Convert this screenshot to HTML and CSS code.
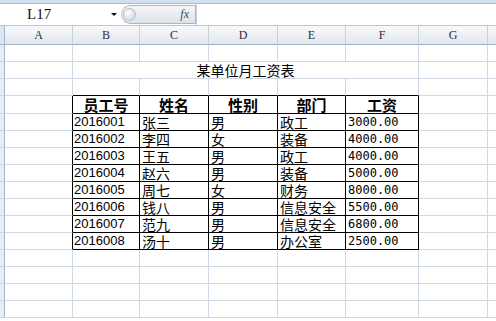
FILE: index.html
```html
<!DOCTYPE html>
<html lang="zh-CN">
<head>
  <meta charset="UTF-8">
  <title>某单位月工资表</title>
  <link rel="stylesheet" href="styles.css">
</head>
<body>

  <div class="ribbon-edge"></div>

  <div class="formula-bar">
    <div class="name-box">
      <span class="cell-ref">L17</span>
      <span class="drop"></span>
    </div>
    <div class="fx-box">
      <span class="grip"></span>
      <span class="fx">fx</span>
    </div>
    <div class="formula-input"></div>
  </div>

  <table class="sheet">
    <colgroup>
      <col class="col-rh">
      <col class="col-a">
      <col class="col-b">
      <col class="col-c">
      <col class="col-d">
      <col class="col-e">
      <col class="col-f">
      <col class="col-g">
      <col class="col-h">
    </colgroup>
    <thead>
      <tr>
        <th class="rh"></th>
        <th>A</th><th>B</th><th>C</th><th>D</th><th>E</th><th>F</th><th>G</th><th></th>
      </tr>
    </thead>
    <tbody>
      <tr><td class="rh"></td><td></td><td></td><td></td><td></td><td></td><td></td><td></td><td></td></tr>
      <tr><td class="rh"></td><td></td><td colspan="5" class="title">某单位月工资表</td><td></td><td></td></tr>
      <tr class="above"><td class="rh"></td><td></td><td></td><td></td><td></td><td></td><td></td><td></td><td></td></tr>

      <tr class="data head">
        <td class="rh"></td><td></td>
        <td>员工号</td><td>姓名</td><td>性别</td><td>部门</td><td>工资</td>
        <td></td><td></td>
      </tr>
      <tr class="data">
        <td class="rh"></td><td></td>
        <td class="num">2016001</td><td>张三</td><td>男</td><td>政工</td><td class="money">3000.00</td>
        <td></td><td></td>
      </tr>
      <tr class="data">
        <td class="rh"></td><td></td>
        <td class="num">2016002</td><td>李四</td><td>女</td><td>装备</td><td class="money">4000.00</td>
        <td></td><td></td>
      </tr>
      <tr class="data">
        <td class="rh"></td><td></td>
        <td class="num">2016003</td><td>王五</td><td>男</td><td>政工</td><td class="money">4000.00</td>
        <td></td><td></td>
      </tr>
      <tr class="data">
        <td class="rh"></td><td></td>
        <td class="num">2016004</td><td>赵六</td><td>男</td><td>装备</td><td class="money">5000.00</td>
        <td></td><td></td>
      </tr>
      <tr class="data">
        <td class="rh"></td><td></td>
        <td class="num">2016005</td><td>周七</td><td>女</td><td>财务</td><td class="money">8000.00</td>
        <td></td><td></td>
      </tr>
      <tr class="data">
        <td class="rh"></td><td></td>
        <td class="num">2016006</td><td>钱八</td><td>男</td><td>信息安全</td><td class="money">5500.00</td>
        <td></td><td></td>
      </tr>
      <tr class="data">
        <td class="rh"></td><td></td>
        <td class="num">2016007</td><td>范九</td><td>男</td><td>信息安全</td><td class="money">6800.00</td>
        <td></td><td></td>
      </tr>
      <tr class="data">
        <td class="rh"></td><td></td>
        <td class="num">2016008</td><td>汤十</td><td>男</td><td>办公室</td><td class="money">2500.00</td>
        <td></td><td></td>
      </tr>

      <tr><td class="rh"></td><td></td><td></td><td></td><td></td><td></td><td></td><td></td><td></td></tr>
      <tr><td class="rh"></td><td></td><td></td><td></td><td></td><td></td><td></td><td></td><td></td></tr>
      <tr><td class="rh"></td><td></td><td></td><td></td><td></td><td></td><td></td><td></td><td></td></tr>
      <tr><td class="rh"></td><td></td><td></td><td></td><td></td><td></td><td></td><td></td><td></td></tr>
    </tbody>
  </table>

</body>
</html>
```

FILE: styles.css
```css
html, body {
  margin: 0;
  padding: 0;
  background-color: #fff;
  overflow: hidden;
  font-family: "Noto Sans CJK SC", sans-serif;
}

/* top of the ribbon, cut off */
.ribbon-edge {
  height: 3px;
  background-color: #d3e0ef;
  border-bottom: 1px solid #a7bbd4;
}

/* formula bar */
.formula-bar {
  display: flex;
  align-items: center;
  height: 21px;
  border-bottom: 1px solid #b7c5d8;
  background-color: #fff;
}

.name-box {
  width: 121px;
  height: 21px;
  display: flex;
  align-items: center;
  position: relative;
}

.cell-ref {
  padding-left: 27px;
  font-family: "Liberation Serif", serif;
  font-size: 15px;
  color: #111;
}

.drop {
  position: absolute;
  left: 111px;
  top: 9px;
  width: 0;
  height: 0;
  border-left: 3px solid transparent;
  border-right: 3px solid transparent;
  border-top: 3px solid #111;
}

.fx-box {
  width: 75px;
  height: 19px;
  display: flex;
  align-items: center;
  justify-content: space-between;
  border: 1px solid #a9b6c6;
  border-left-color: #b8c4d2;
  border-radius: 10px 0 0 10px;
  background: linear-gradient(#f4f6f9, #dde3eb);
  box-sizing: border-box;
}

.grip {
  width: 13px;
  height: 13px;
  margin-left: 1px;
  border-radius: 50%;
  border: 1px solid #b3bdc9;
  box-sizing: border-box;
  background: radial-gradient(circle at 35% 35%, #fff, #d7dee6 70%, #b6c0cc);
}

.fx {
  margin-right: 6px;
  font-family: "Liberation Serif", serif;
  font-style: italic;
  font-size: 12px;
  color: #3c4a5c;
}

.formula-input {
  flex: 1;
  height: 21px;
  border-left: 1px solid #c5d0dd;
}

/* sheet grid */
.sheet {
  table-layout: fixed;
  border-collapse: separate;
  border-spacing: 0;
  width: 520px;
}

.col-rh { width: 5px; }
.col-a { width: 68px; }
.col-b { width: 67px; }
.col-c { width: 69px; }
.col-d { width: 69px; }
.col-e { width: 68px; }
.col-f { width: 73px; }
.col-g { width: 69px; }
.col-h { width: 32px; }

.sheet th,
.sheet td {
  box-sizing: border-box;
  padding: 0;
  white-space: nowrap;
}

.sheet th {
  height: 19px;
  background: linear-gradient(#f7f9fc, #e3e8ef);
  border-right: 1px solid #c8d2df;
  border-bottom: 1px solid #9eb2c9;
  font-family: "Liberation Serif", serif;
  font-weight: normal;
  font-size: 12px;
  color: #2a2f38;
  line-height: 18px;
  text-align: center;
}

.sheet td {
  height: 17px;
  border-right: 1px solid #d0d7e5;
  border-bottom: 1px solid #d0d7e5;
  font-size: 14px;
  line-height: 16px;
  color: #000;
  padding-left: 2px;
  vertical-align: bottom;
}

.sheet .rh {
  background-color: #e6edf6;
  border-right: 1px solid #9eb6ce;
  border-bottom: 1px solid #c9d6e6;
  padding: 0;
}

.sheet th.rh {
  background: #dde6f1;
  border-bottom: 1px solid #9eb2c9;
}

.sheet td.title {
  text-align: center;
  padding-left: 0;
  font-size: 14px;
}

/* bordered salary table, B4:F12 */
.sheet tr.above td:nth-child(n+3):nth-child(-n+7) {
  border-bottom-color: #000;
}

.sheet tr.data td:nth-child(2) {
  border-right-color: #000;
}

.sheet tr.data td:nth-child(n+3):nth-child(-n+7) {
  border-right-color: #000;
  border-bottom-color: #000;
}

.sheet tr.head td {
  height: 18px;
}

.sheet tr.head td:nth-child(n+3):nth-child(-n+7) {
  font-weight: bold;
  font-size: 15px;
  text-align: center;
  padding-left: 0;
}

.sheet td.num {
  font-family: "Liberation Sans", sans-serif;
  font-size: 13px;
  padding-left: 1px;
}

.sheet td.money {
  font-family: "DejaVu Sans Mono", monospace;
  font-size: 12px;
  padding-left: 2px;
}
```
